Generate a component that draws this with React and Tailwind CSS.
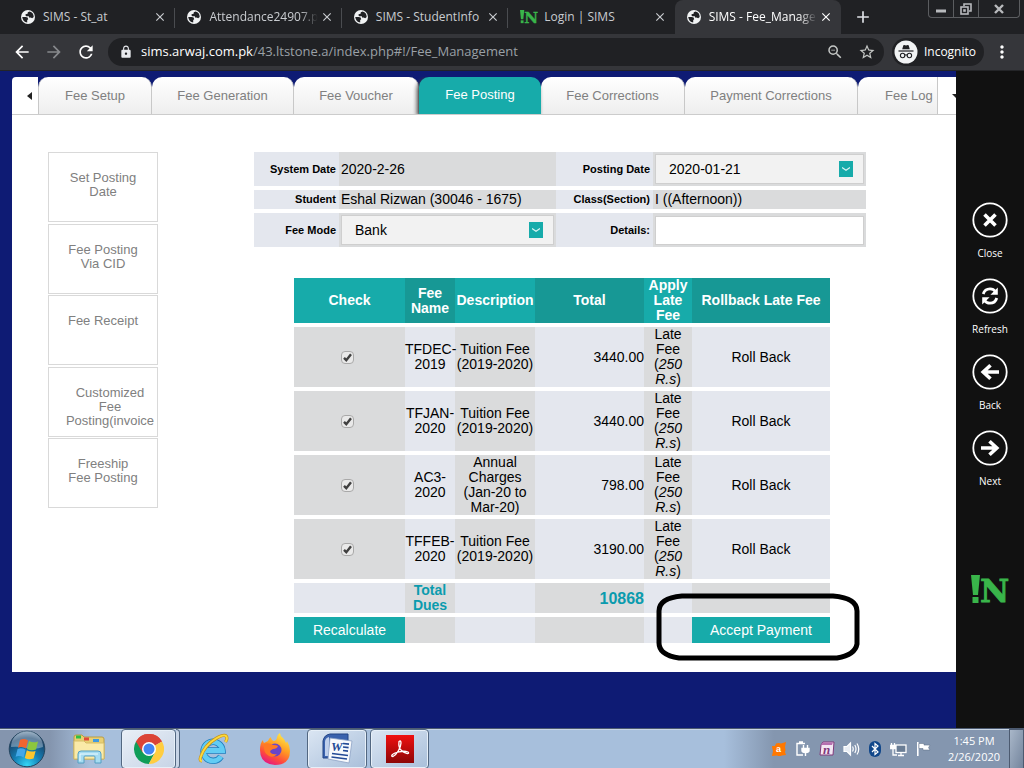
import React from "react";
import {
  MdArrowBack,
  MdArrowForward,
  MdRefresh,
  MdLock,
  MdStarBorder,
  MdZoomOut,
  MdMoreVert,
  MdClose,
  MdAdd,
} from "react-icons/md";

function GlobeIcon() {
  return (
    <svg viewBox="0 0 14 14" className="size-3.5 shrink-0" aria-hidden="true">
      <circle cx="7" cy="7" r="7" fill="#f1f3f4" />
      <path
        d="M1.2 7h3.6q2.4 0 2.4 2.2l-1 .8v2.6Q2 12 1.200 7Z M8.600 1.600q4 1 4.100 5.400l-1.500 1.300-1.600-.9-1.200.4-.6-1.500-2.600-.1q-1.200-1-.6-2l2-.4.200-1.500Z"
        fill="#202124"
      />
    </svg>
  );
}

function BrandMark({ className }) {
  return (
    <svg viewBox="0 0 38 30" className={className} aria-hidden="true">
      <path d="M0 0h9L7 20H2Z" fill="#39b54a" />
      <rect x="1.5" y="22" width="6" height="6" fill="#39b54a" />
      <text
        x="9"
        y="27"
        fontSize="32"
        fontWeight="700"
        fontFamily="DejaVu Serif, serif"
        fill="#39b54a"
        stroke="#39b54a"
        strokeWidth=".8"
      >
        N
      </text>
    </svg>
  );
}

const browserTabs = [
  { title: "SIMS - St_at" },
  { title: "Attendance24907.p", fade: true },
  { title: "SIMS - StudentInfo" },
  { title: "Login | SIMS", brand: true, last: true },
  { title: "SIMS - Fee_Manage", active: true, fade: true },
];

function BrowserTab({ title, brand, active, last, fade }) {
  return (
    <div
      className={
        "relative flex min-w-0 flex-1 items-center pl-3 pr-2 " +
        (active ? "rounded-t-lg bg-[#35363a] text-white" : "text-[#c9ccd0]")
      }
    >
      {brand ? <BrandMark className="h-4 w-[18px] shrink-0" /> : <GlobeIcon />}
      <span
        className={
          "min-w-0 flex-1 whitespace-nowrap " +
          (brand ? "ml-1.5 " : "ml-2 ") +
          (fade ? "[mask-image:linear-gradient(to_right,#000_calc(100%-18px),transparent)]" : "")
        }
      >
        {title}
      </span>
      <button type="button" aria-label={"Close " + title} className="ml-0.5 shrink-0">
        <MdClose className="size-3.5" />
      </button>
      {!active && !last && <span className="absolute right-0 top-2 h-5 w-px bg-[#4a4c50]" />}
    </div>
  );
}

function WindowControls() {
  return (
    <div className="flex h-[18px] w-[92px] rounded-b-sm border border-t-0 border-[#5b5d60] text-[#b8babd]">
      <button type="button" aria-label="Minimize" className="flex w-[25px] items-center justify-center border-r border-[#5b5d60]">
        <svg viewBox="0 0 12 12" className="size-3">
          <rect x="1" y="6.5" width="10" height="3" fill="currentColor" />
        </svg>
      </button>
      <button type="button" aria-label="Restore" className="flex w-[25px] items-center justify-center border-r border-[#5b5d60]">
        <svg viewBox="0 0 12 12" className="size-3" fill="none" stroke="currentColor" strokeWidth="1.6">
          <path d="M4 3V1h7v7H9" />
          <rect x="1" y="4" width="7" height="7" />
          <rect x="4" y="7" width="1" height="1" />
        </svg>
      </button>
      <button type="button" aria-label="Close window" className="flex flex-1 items-center justify-center">
        <svg viewBox="0 0 12 12" className="size-3" fill="none" stroke="currentColor" strokeWidth="2.4">
          <path d="M2 2l8 8M10 2l-8 8" />
        </svg>
      </button>
    </div>
  );
}

function BrowserChrome() {
  return (
    <header className="font-['Open_Sans','Noto_Sans',sans-serif]">
      <div className="flex h-[34px] bg-[#202124] pl-[9px] pr-1 text-xs">
        <div className="flex w-[832px] shrink">
          {browserTabs.map((t) => (
            <BrowserTab key={t.title} {...t} />
          ))}
        </div>
        <button type="button" aria-label="New tab" className="ml-3 text-[#dee1e6]">
          <MdAdd className="size-5" />
        </button>
        <div className="ml-auto">
          <WindowControls />
        </div>
      </div>
      <div className="flex h-[37px] items-center gap-3 border-b border-[#242528] bg-[#35363a] pl-3 pr-3 text-white">
        <button type="button" aria-label="Back">
          <MdArrowBack className="size-5" />
        </button>
        <button type="button" aria-label="Forward" className="text-[#87898c]">
          <MdArrowForward className="size-5" />
        </button>
        <button type="button" aria-label="Reload">
          <MdRefresh className="size-5" />
        </button>
        <div className="flex h-7 min-w-0 flex-1 items-center rounded-full bg-[#202124] pl-[11px] pr-2">
          <MdLock className="size-3.5 shrink-0 text-[#e8eaed]" />
          <span className="ml-2 min-w-0 flex-1 truncate text-[13px] text-[#9aa0a6]">
            <span className="text-white">sims.arwaj.com.pk</span>/43.ltstone.a/index.php#!/Fee_Management
          </span>
          <button type="button" aria-label="Zoom" className="text-[#c4c7c5]">
            <MdZoomOut className="size-[18px]" />
          </button>
          <button type="button" aria-label="Bookmark" className="ml-3.5 text-[#c4c7c5]">
            <MdStarBorder className="size-[18px]" />
          </button>
        </div>
        <div className="-ml-1 flex h-7 items-center gap-1.5 rounded-full bg-[#202124] pl-0.5 pr-2 text-xs">
          <svg viewBox="0 0 24 24" className="size-6" aria-hidden="true">
            <circle cx="12" cy="12" r="11.5" fill="#f1f3f4" />
            <path d="M8.2 9.3 9.3 5.6q.2-.7.9-.5l1.8.5 1.8-.5q.7-.2.9.5l1.1 3.7Z" fill="#202124" />
            <rect x="4.5" y="10.4" width="15" height="1.2" fill="#202124" />
            <g fill="none" stroke="#202124" strokeWidth="1.1">
              <circle cx="8.6" cy="15.5" r="2.2" />
              <circle cx="15.4" cy="15.5" r="2.2" />
              <path d="M10.8 15.2q1.2-.8 2.4 0" />
            </g>
          </svg>
          <span>Incognito</span>
        </div>
        <button type="button" aria-label="Menu" className="-ml-1">
          <MdMoreVert className="size-5" />
        </button>
      </div>
    </header>
  );
}

function ModuleTabs() {
  const base =
    "h-[37px] shrink-0 rounded-t-[10px] border-r border-[#c8c8c8] bg-gradient-to-b from-white to-[#eeeeee] text-[#808080]";
  return (
    <nav className="flex overflow-hidden rounded-tl-sm border-b border-[#cccccc] bg-[#0e1b74] text-[13px]">
      <button type="button" aria-label="Scroll tabs left" className="flex w-[26px] shrink-0 items-center justify-end bg-white pr-1.5">
        <svg viewBox="0 0 5 8" className="h-2 w-[5px]">
          <path d="M5 0v8L0 4Z" fill="#222" />
        </svg>
      </button>
      <button type="button" className={base + " w-[114px] border-l"}>Fee Setup</button>
      <button type="button" className={base + " w-[142px]"}>Fee Generation</button>
      <button type="button" className={base + " w-[125px]"}>Fee Voucher</button>
      <button
        type="button"
        className="relative h-[37px] w-[122px] shrink-0 rounded-t-[10px] bg-[#17abaa] pb-0.5 text-white shadow-[-2px_2px_4px_#444]"
      >
        Fee Posting
      </button>
      <button type="button" className={base + " w-[144px]"}>Fee Corrections</button>
      <button type="button" className={base + " w-[173px]"}>Payment Corrections</button>
      <button
        type="button"
        className="h-[37px] min-w-0 flex-1 overflow-hidden whitespace-nowrap rounded-tl-[10px] border-r border-[#c8c8c8] bg-gradient-to-b from-white to-[#eeeeee] pl-[27px] text-left text-[#808080]"
      >
        Fee Log
      </button>
      <button type="button" aria-label="Scroll tabs right" className="flex w-[18px] shrink-0 items-center justify-end overflow-hidden bg-white">
        <svg viewBox="0 0 4 4" className="h-1 w-1">
          <path d="M0 0h4v4Z" fill="#222" />
        </svg>
      </button>
    </nav>
  );
}

function SideMenu() {
  const item =
    "h-[70px] w-full border border-[#d9d9d9] pt-[18px] text-center text-[13px] leading-[14px] text-[#808080] ";
  return (
    <nav className="flex h-[356px] w-[110px] shrink-0 flex-col justify-between">
      <a href="#set-posting-date" className={item + "px-2"}>Set Posting<br />Date</a>
      <a href="#fee-posting-cid" className={item + "px-2"}>Fee Posting<br />Via CID</a>
      <a href="#fee-receipt" className={item + "px-2"}>Fee Receipt</a>
      <a href="#customized" className={item + "whitespace-nowrap pl-4 pr-0.5"}>Customized<br />Fee<br />Posting(invoice</a>
      <a href="#freeship" className={item + "px-2"}>Freeship<br />Fee Posting</a>
    </nav>
  );
}

function SelectBox({ id, value }) {
  return (
    <div className="relative w-full">
      <select
        id={id}
        defaultValue={value}
        className="h-[30px] w-full appearance-none rounded-none border border-[#cfcfcf] bg-[#f2f2f2] pl-[13px] text-sm text-black"
      >
        <option>{value}</option>
      </select>
      <span className="pointer-events-none absolute right-[11px] top-[7px] flex h-4 w-3.5 items-center justify-center bg-[#17abaa]">
        <svg viewBox="0 0 8 4" className="h-1 w-2" fill="none" stroke="#d9f3f2" strokeWidth="1.2">
          <path d="M0 .5 4 3.3 8 .5" />
        </svg>
      </span>
    </div>
  );
}

function PostingForm() {
  const label = "flex items-center justify-end bg-[#e4e7ee] pr-[3px] text-[11px] font-bold";
  const value = "flex items-center bg-[#dadbdc] px-0.5 text-sm leading-[19px]";
  return (
    <form className="grid w-full max-w-[612px] grid-cols-[85px_217px_97px_1fr] grid-rows-[34px_19px_34px] gap-y-1">
      <span className={label}>System Date</span>
      <span className={value}>2020-2-26</span>
      <label htmlFor="posting-date" className={label}>Posting Date</label>
      <div className={value}><SelectBox id="posting-date" value="2020-01-21" /></div>
      <span className={label}>Student</span>
      <span className={value}>Eshal Rizwan (30046 - 1675)</span>
      <span className={label}>Class(Section)</span>
      <span className={value}>I ((Afternoon))</span>
      <label htmlFor="fee-mode" className={label}>Fee Mode</label>
      <div className={value}><SelectBox id="fee-mode" value="Bank" /></div>
      <label htmlFor="details" className={label}>Details:</label>
      <div className={value}>
        <input id="details" type="text" className="h-[29px] w-full border border-[#cfcfcf] bg-white px-3" />
      </div>
    </form>
  );
}

const fees = [
  { name: ["TFDEC-", "2019"], desc: ["Tuition Fee", "(2019-2020)"], total: "3440.00" },
  { name: ["TFJAN-", "2020"], desc: ["Tuition Fee", "(2019-2020)"], total: "3440.00" },
  { name: ["AC3-", "2020"], desc: ["Annual", "Charges", "(Jan-20 to", "Mar-20)"], total: "798.00" },
  { name: ["TFFEB-", "2020"], desc: ["Tuition Fee", "(2019-2020)"], total: "3190.00" },
];

function Lines({ lines }) {
  return lines.map((l) => (
    <span key={l} className="block whitespace-nowrap">{l}</span>
  ));
}

function Tick({ label }) {
  return (
    <span className="mr-1 inline-grid size-[13px] align-middle">
      <input
        type="checkbox"
        defaultChecked
        aria-label={label}
        className="peer col-start-1 row-start-1 m-0 size-[13px] appearance-none rounded-sm border border-[#a9a9a9] bg-[#e9e9e9]"
      />
      <svg
        viewBox="0 0 13 13"
        className="pointer-events-none invisible col-start-1 row-start-1 size-[13px] peer-checked:visible"
        fill="none"
        stroke="#404040"
        strokeWidth="2.4"
        aria-hidden="true"
      >
        <path d="M3 6.800 5.300 9.200 10 3.300" />
      </svg>
    </span>
  );
}

const grey = "bg-[#dadbdc] p-0";
const pale = "bg-[#e4e7ee] p-0";
const headA = "bg-[#17abaa] p-0";
const headB = "bg-[#179895] p-0";

function FeeTable() {
  return (
    <div className="relative ml-1 w-full max-w-[536px]">
      <table className="w-full table-fixed border-separate border-spacing-x-0 border-spacing-y-1 text-center text-sm leading-[15px]">
        <colgroup>
          <col className="w-[111px]" />
          <col className="w-[50px]" />
          <col className="w-[80px]" />
          <col className="w-[109px]" />
          <col className="w-[48px]" />
          <col />
        </colgroup>
        <thead className="text-white">
          <tr>
            <th className={headA}>Check</th>
            <th className={headB}>Fee Name</th>
            <th className={headA}>Description</th>
            <th className={headB}>Total</th>
            <th className={headA}>Apply Late Fee</th>
            <th className={headB}>Rollback Late Fee</th>
          </tr>
        </thead>
        <tbody>
          {fees.map((f) => (
            <tr key={f.name.join("")}>
              <td className={grey}>
                <Tick label={"Select " + f.name.join("")} />
              </td>
              <td className={pale}><Lines lines={f.name} /></td>
              <td className={grey}><Lines lines={f.desc} /></td>
              <td className={pale + " text-right"}>{f.total}</td>
              <td className={grey}>Late<br />Fee<br />(<i>250<br />R.s</i>)</td>
              <td className={pale}>Roll Back</td>
            </tr>
          ))}
          <tr className="font-bold text-[#0b9bae]">
            <td className={pale} />
            <td className={grey}>Total Dues</td>
            <td className={pale} />
            <td className={grey + " text-right text-base leading-[15px]"}>10868</td>
            <td className={pale} />
            <td className={grey} />
          </tr>
          <tr className="h-[26px]">
            <td className={headA}>
              <button type="button" className="h-[26px] w-full text-white">Recalculate</button>
            </td>
            <td className={grey} />
            <td className={pale} />
            <td className={grey} />
            <td className={pale} />
            <td className={headA}>
              <button type="button" className="h-[26px] w-full text-white">Accept Payment</button>
            </td>
          </tr>
        </tbody>
      </table>
      <svg
        viewBox="0 0 204 68"
        className="pointer-events-none absolute -bottom-3.5 -right-[30px] h-[68px] w-[204px]"
        fill="none"
        stroke="#000"
        strokeWidth="5"
        aria-hidden="true"
      >
        <path d="M26 3H177Q201 5 201 18V51Q199 62 181 65H23Q3 62 3 50V18Q3 5 26 3Z" />
      </svg>
    </div>
  );
}

function RailButton({ label, children }) {
  return (
    <button type="button" className="flex h-[76px] flex-col items-center text-[10px] leading-4 text-white">
      <svg viewBox="0 0 36 36" className="size-9" fill="none" stroke="#fff" aria-hidden="true">
        <circle cx="18" cy="18" r="16.7" strokeWidth="1.8" />
        {children}
      </svg>
      <span className="mt-[7px]">{label}</span>
    </button>
  );
}

function ActionRail() {
  return (
    <aside className="flex w-[68px] shrink-0 flex-col items-center bg-[#111111] pt-[131px] font-['Open_Sans','Noto_Sans',sans-serif]">
      <RailButton label="Close">
        <path d="M12.5 12.5l11 11M23.5 12.5l-11 11" strokeWidth="3.6" />
      </RailButton>
      <RailButton label="Refresh">
        <path d="M11.2 16q1.6-5.2 6.8-5.2 3.6 0 5.4 2.8M24.8 20q-1.6 5.2-6.8 5.2-3.6 0-5.4-2.8" strokeWidth="2.8" />
        <path d="M25.8 9.5v7.2h-7.4ZM10.2 26.5v-7.2h7.4Z" fill="#fff" stroke="none" />
      </RailButton>
      <RailButton label="Back">
        <path d="M27 18H12M18.5 11.2 11.2 18l7.3 6.8" strokeWidth="3.6" />
      </RailButton>
      <RailButton label="Next">
        <path d="M9 18h15M17.5 11.2 24.8 18l-7.3 6.8" strokeWidth="3.6" />
      </RailButton>
      <BrandMark className="mt-[69px] h-[30px] w-[38px]" />
    </aside>
  );
}

function StartOrb() {
  return (
    <svg viewBox="0 0 38 38" className="size-[38px]" aria-hidden="true">
      <defs>
        <radialGradient id="orb" cx="50%" cy="95%" r="95%">
          <stop offset="0" stopColor="#35d6f5" />
          <stop offset=".4" stopColor="#147fb5" />
          <stop offset=".8" stopColor="#1a4268" />
          <stop offset="1" stopColor="#7e97ae" />
        </radialGradient>
      </defs>
      <circle cx="19" cy="19" r="17.8" fill="url(#orb)" stroke="#24455f" />
      <path d="M3 17a16 16 0 0 1 32 0q-7 3-16 1T3 17Z" fill="#d5e3ef" opacity=".4" />
      <path d="M12 10q4-2 8 .5l-2 8q-4-2.4-8-.8Z" fill="#f0652f" />
      <path d="M21 11q4 2.4 9 .5l-2 8q-5 1.6-9-.6Z" fill="#8cc63e" />
      <path d="M9.6 19q4-1.6 8 .8l-2 7.6q-4-2.3-8-.7Z" fill="#43a7e8" />
      <path d="M18.8 20.2q4 2.2 8.8.7l-2 7.6q-5 1.6-8.8-.6Z" fill="#fcc62d" />
    </svg>
  );
}

function ExplorerIcon() {
  return (
    <svg viewBox="0 0 34 30" className="h-[30px] w-[34px]" aria-hidden="true">
      <path d="M2 3q0-2 2-2h6l2 2h18q2 0 2 2v20H2Z" fill="#e8cf73" stroke="#b99d45" />
      <path d="M4 1.500h5v3H4Z" fill="#2fbf43" />
      <path d="M12 3.500h5v3h-5Z" fill="#e14a3b" />
      <path d="M21 5h6v3h-6Z" fill="#3f9ae0" />
      <path d="M2 7h10l2 2h18v16H2Z" fill="#faeaa8" stroke="#d6bd68" />
      <path d="M6 29V20q0-3 3-3h17q3 0 3 3v9h-6v-6q0-1-1-1h-9q-1 0-1 1v6Z" fill="#a6dcf1" stroke="#559fc2" />
      <path d="M8 27v-7h18" fill="none" stroke="#e9faff" />
    </svg>
  );
}

function ChromeIcon() {
  return (
    <svg viewBox="0 0 30 30" className="size-[30px]" aria-hidden="true">
      <path d="M15 15 2 7.5A15 15 0 0 1 28 7.5Z" fill="#db4437" />
      <path d="M15 15 2 7.5A15 15 0 0 0 14.8 30L21 18.5Z" fill="#0f9d58" />
      <path d="M15 15 28 7.5A15 15 0 0 1 14.8 30L21 18.5Z" fill="#ffcd40" />
      <path d="M15 7.5h13A15 15 0 0 0 2 7.5l6.5 11Z" fill="#db4437" />
      <circle cx="15" cy="15" r="7" fill="#fff" />
      <circle cx="15" cy="15" r="5.5" fill="#4285f4" />
    </svg>
  );
}

function WebBrowserIcon() {
  return (
    <svg viewBox="0 0 34 34" className="size-[34px]" aria-hidden="true">
      <g fill="none">
        <path d="M9 18.500H26.500A9.500 9.500 0 1 0 25 24.500" stroke="#1e7fbe" strokeWidth="6.400" />
        <path d="M9 18.500H26.500A9.500 9.500 0 1 0 25 24.500" stroke="#62ccf4" strokeWidth="4.800" />
        <path d="M6 29q-3 0-1-5Q9 13 20 6.500 28 2 30 4t-.5 6" stroke="#c9931a" strokeWidth="3.200" />
        <path d="M6 29q-3 0-1-5Q9 13 20 6.500 28 2 30 4t-.5 6" stroke="#fbd93c" strokeWidth="2" />
      </g>
    </svg>
  );
}

function FirefoxIcon() {
  return (
    <svg viewBox="0 0 32 32" className="size-8" aria-hidden="true">
      <defs>
        <linearGradient id="fox" x1=".8" y1="0" x2=".3" y2="1">
          <stop offset="0" stopColor="#fff04a" />
          <stop offset=".45" stopColor="#ff9a22" />
          <stop offset=".75" stopColor="#ff4a3c" />
          <stop offset="1" stopColor="#e31587" />
        </linearGradient>
      </defs>
      <path
        d="M4 7q0 2 1 3l4-2q1-3 3-4 0 3 3 4 3-1 3-4 1-3 3-4 0 3 3 5 2 2 3 5 1-1 1-2 3 5 3 10 0 14-15 14Q1 31 1 17 1 10 4 7Z"
        fill="url(#fox)"
      />
      <circle cx="16" cy="17" r="6.500" fill="#6a45c8" />
      <path d="M5 11q5-2 9 1 4 0 5 1-1 3-5 3-3 1-3 3 2 3 7 2-3 4-8 2-6-3-5-12Z" fill="#ff7a24" />
    </svg>
  );
}

function WordIcon() {
  return (
    <svg viewBox="0 0 32 32" className="size-8" aria-hidden="true">
      <path d="M9 1h18v24H2V8q1-6 7-7Z" fill="#3a62ad" stroke="#224485" />
      <path d="M8 4q-4 1-4 5v14h4Z" fill="#bfd0ec" />
      <path d="M9 5 31 8l-3 22L7 26Z" fill="#f7f9fc" stroke="#8da2c5" strokeWidth=".8" />
      <text x="10" y="18" fontSize="13" fontWeight="700" fontStyle="italic" fontFamily="Liberation Serif, serif" fill="#234a96">
        W
      </text>
      <path d="M22 10.500l6 .7M22 14l5.600.7M22 17.500l5 .6M11 20.500l16 2M10.500 24l15.500 2" stroke="#234a96" strokeWidth="1.700" />
    </svg>
  );
}

function AcrobatIcon() {
  return (
    <svg viewBox="0 0 28 28" className="size-7" aria-hidden="true">
      <defs>
        <linearGradient id="acro" x1="0" y1="0" x2="0" y2="1">
          <stop offset="0" stopColor="#f01010" />
          <stop offset="1" stopColor="#8d0606" />
        </linearGradient>
      </defs>
      <rect width="28" height="28" fill="url(#acro)" />
      <path
        d="M13 6.500q2-1.500 2 1.500 0 3-2.500 7.500T7 21.500q-2 0-1-1.500 1.500-2 7-3.200t9 .2q1.500 1.500-.8 1.600-2.400 0-5.700-3T13 6.500Z"
        fill="none"
        stroke="#fff"
        strokeWidth="1.300"
      />
    </svg>
  );
}

function TaskButton({ label, running, className, children }) {
  return (
    <button
      type="button"
      aria-label={label}
      className={
        "flex h-10 items-center justify-center " +
        (running ? "rounded-sm border border-[#526781] bg-gradient-to-br from-[#dbe6f3] to-[#a9bfda] shadow-[inset_0_0_0_1px_#e6eff8] " : "") +
        className
      }
    >
      {children}
    </button>
  );
}

function TrayIcons() {
  return (
    <div className="flex items-center gap-2" aria-hidden="true">
      <svg viewBox="0 0 16 16" className="size-4">
        <path d="M5 2.500q3-1 5 0L15 1l-1 5q1 3 0 5l1 3-4 .5q-3 1-5 0L1 15l1-5Q1 7 1 5L4 5Z" fill="#ff7800" />
        <text x="5" y="11" fontSize="9" fontWeight="700" fontFamily="Liberation Sans, sans-serif" fill="#fff">a</text>
      </svg>
      <svg viewBox="0 0 16 16" className="size-4" fill="none" stroke="#fff" strokeWidth="1.400">
        <path d="M8 14H2V2.500h8M4 1h4" />
        <path d="M8.500 4v3M12.500 4v3M7 7.500h7v2q0 2-3.500 2T7 9.500ZM10.500 11.500V15" fill="#fff" />
      </svg>
      <svg viewBox="0 0 16 16" className="size-4">
        <path d="M4 1h11l-1 13H1L2 4Z" fill="#f3e6f3" stroke="#80397b" />
        <path d="M2 4 4 1.500h10L13 4Z" fill="#b56fb0" />
        <text x="4" y="13" fontSize="13" fontWeight="700" fontStyle="italic" fontFamily="Liberation Serif, serif" fill="#80397b">n</text>
      </svg>
      <svg viewBox="0 0 17 16" className="h-4 w-[17px]" fill="none" stroke="#fff" strokeWidth="1.200">
        <path d="M1 5.500h3L7.500 2v12L4 10.500H1Z" fill="#e9eef4" />
        <path d="M9.500 5.500q1.500 2.500 0 5M11.800 4q2.400 4 0 8M14 2.500q3.500 5.500 0 11" />
      </svg>
      <svg viewBox="0 0 14 16" className="h-4 w-3.5">
        <rect x="1" width="12" height="16" rx="6" fill="#11478a" />
        <path d="M4 5l6 6-3 2.500v-11L10 5l-6 6" fill="none" stroke="#fff" strokeWidth="1.200" />
      </svg>
      <svg viewBox="0 0 17 16" className="h-4 w-[17px]" fill="none" stroke="#fff" strokeWidth="1.300">
        <rect x="6" y="4" width="10" height="7.500" fill="#6a7d95" />
        <path d="M8 14.500h6M11 11.500v3M3 8v6h4" />
        <path d="M1.500 2v2M4.500 2v2M.7 4.500h4.600v3H.7Z" fill="#fff" />
      </svg>
      <svg viewBox="0 0 16 16" className="size-4">
        <path d="M2 1h1.600v14H2Z" fill="#fff" />
        <path d="M4 2.500h5v1.600h6l-1.500 2.600 1.500 2.300H8V7.500H4Z" fill="#fff" stroke="#5b6b80" strokeWidth=".5" />
      </svg>
    </div>
  );
}

function Taskbar() {
  return (
    <footer className="flex h-10 items-center border-t border-[#4c5a70] bg-[linear-gradient(to_right,#8495ae_0px,#8495ae_50px,#a7bfdc_90px,#a7bfdc_calc(100%-300px),#8496af_calc(100%-250px),#8496af_100%)] shadow-[inset_0_1px_0_#c9d6e6]">
      <TaskButton label="Start" className="ml-2 w-[38px]"><StartOrb /></TaskButton>
      <TaskButton label="File Explorer" className="ml-6 w-[38px]"><ExplorerIcon /></TaskButton>
      <TaskButton label="Google Chrome" running className="ml-[13px] w-[55px] from-[#e9eff7] to-[#c7d4e6]"><ChromeIcon /></TaskButton>
      <div className="h-10 w-1 rounded-r-sm border-y border-r border-[#526781] bg-[#c7d4e6]" />
      <TaskButton label="Internet Explorer" className="ml-3.5 w-[38px]"><WebBrowserIcon /></TaskButton>
      <TaskButton label="Firefox" className="ml-6 w-[38px]"><FirefoxIcon /></TaskButton>
      <TaskButton label="Word" running className="ml-[13px] w-[60px]"><WordIcon /></TaskButton>
      <TaskButton label="Acrobat Reader" running className="ml-[3px] w-[59px]"><AcrobatIcon /></TaskButton>
      <div className="ml-auto flex items-center">
        <TrayIcons />
        <div className="ml-3.5 w-[58px] whitespace-nowrap text-center font-['Open_Sans','Noto_Sans',sans-serif] text-[11px] leading-4 text-white">
          <div>1:45 PM</div>
          <div>2/26/2020</div>
        </div>
        <button
          type="button"
          aria-label="Show desktop"
          className="ml-1.5 h-10 w-[15px] border border-[#4c5a70] bg-gradient-to-br from-[#a9b7c9] to-[#74859d]"
        />
      </div>
    </footer>
  );
}

export default function App() {
  return (
    <div className="flex min-h-screen flex-col bg-[#0e1b74] font-['Liberation_Sans',Arial,sans-serif] text-black">
      <BrowserChrome />
      <div className="flex flex-1">
        <main className="min-w-0 flex-1 pl-3 pt-1.5">
          <ModuleTabs />
          <div className="flex bg-white pb-[25px] pl-9 pt-[37px]">
            <SideMenu />
            <div className="flex min-w-0 flex-1 flex-col items-center gap-[27px] pl-1.5">
              <PostingForm />
              <FeeTable />
            </div>
          </div>
        </main>
        <ActionRail />
      </div>
      <Taskbar />
    </div>
  );
}
